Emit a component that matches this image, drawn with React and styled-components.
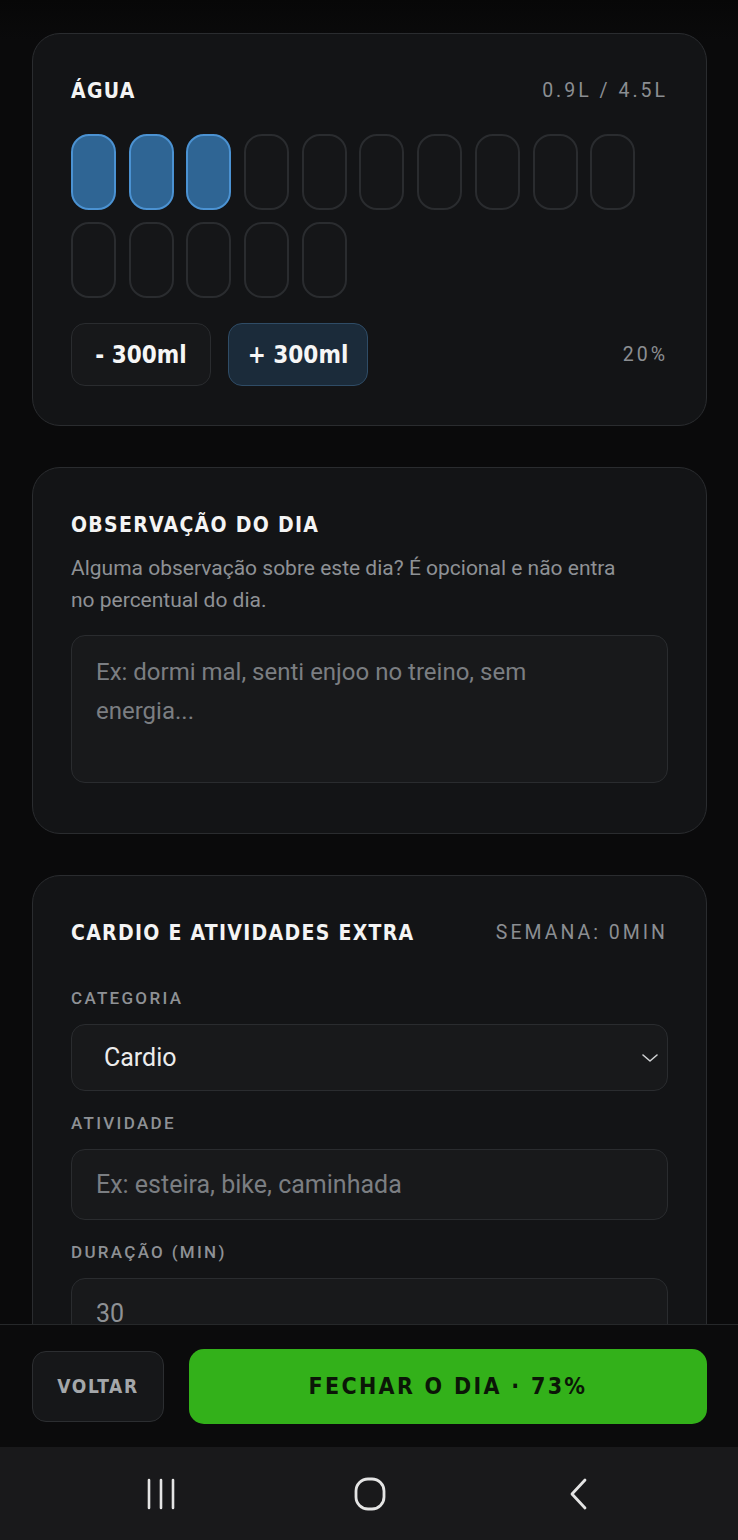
import styled, { createGlobalStyle } from "styled-components";

const GlobalStyle = createGlobalStyle`
  html, body {
    margin: 0;
    padding: 0;
    background: #0a0a0b;
  }
  * {
    box-sizing: border-box;
  }
`;

const narrow = `"Liberation Sans Narrow", "DejaVu Sans Condensed", "Roboto", sans-serif`;
const body = `"Roboto", "Liberation Sans", sans-serif`;

const cups = Array.from({ length: 15 }, (_, i) => i < 3);

const App = () => {
  return (
    <>
      <GlobalStyle />
      <Screen>
        <Scroll>
          <Card>
            <CardHeader>
              <CardTitle>ÁGUA</CardTitle>
              <Meta>0.9L / 4.5L</Meta>
            </CardHeader>
            <CupGrid>
              {cups.map((full, i) => (
                <Cup key={i} full={full} />
              ))}
            </CupGrid>
            <WaterActions>
              <WaterButton>- 300ml</WaterButton>
              <WaterButton primary>+ 300ml</WaterButton>
              <Percent>20%</Percent>
            </WaterActions>
          </Card>

          <Card bottom={50}>
            <CardTitle>OBSERVAÇÃO DO DIA</CardTitle>
            <Description>
              Alguma observação sobre este dia? É opcional e não entra no
              percentual do dia.
            </Description>
            <NoteArea placeholder="Ex: dormi mal, senti enjoo no treino, sem energia..." />
          </Card>

          <Card>
            <CardHeader>
              <CardTitle>CARDIO E ATIVIDADES EXTRA</CardTitle>
              <Meta>SEMANA: 0MIN</Meta>
            </CardHeader>
            <Fields>
              <FieldLabel>CATEGORIA</FieldLabel>
              <SelectBox>
                <span>Cardio</span>
                <svg width="18" height="10" viewBox="0 0 18 10" fill="none">
                  <path
                    d="M2 2l7 6 7-6"
                    stroke="#d0d2d4"
                    strokeWidth="1.6"
                    strokeLinecap="round"
                    strokeLinejoin="round"
                  />
                </svg>
              </SelectBox>
              <FieldLabel>ATIVIDADE</FieldLabel>
              <TextInput placeholder="Ex: esteira, bike, caminhada" />
              <FieldLabel>DURAÇÃO (MIN)</FieldLabel>
              <TextInput defaultValue="30" />
            </Fields>
          </Card>
        </Scroll>

        <Footer>
          <BackButton>VOLTAR</BackButton>
          <CloseButton>FECHAR O DIA · 73%</CloseButton>
        </Footer>

        <NavBar>
          <svg width="34" height="34" viewBox="0 0 34 34" fill="none">
            <path
              d="M4 3v28M16 3v28M28 3v28"
              stroke="#e4e4e4"
              strokeWidth="2.6"
              strokeLinecap="round"
            />
          </svg>
          <svg width="34" height="34" viewBox="0 0 34 34" fill="none">
            <rect
              x="3"
              y="2"
              width="28"
              height="30"
              rx="12"
              stroke="#e4e4e4"
              strokeWidth="2.8"
            />
          </svg>
          <svg width="34" height="34" viewBox="0 0 34 34" fill="none">
            <path
              d="M24 3L11 17l13 14"
              stroke="#e4e4e4"
              strokeWidth="2.8"
              strokeLinecap="round"
              strokeLinejoin="round"
            />
          </svg>
        </NavBar>
      </Screen>
    </>
  );
};

export default App;

const Screen = styled.div`
  height: 1540px;
  width: 738px;
  display: flex;
  flex-direction: column;
  background: #0a0a0b;
  overflow: hidden;
`;

const Scroll = styled.div`
  flex: 1;
  min-height: 0;
  overflow: hidden;
  padding: 33px 31px 0 32px;
  display: flex;
  flex-direction: column;
  gap: 41px;
  background: linear-gradient(180deg, #070707 0px, #0a0a0b 40px);
`;

const Card = styled.section`
  flex-shrink: 0;
  background: #131416;
  border: 1px solid #2a2c2f;
  border-radius: 28px;
  padding: 44px 38px ${(p) => p.bottom || 39}px;
`;

const CardHeader = styled.div`
  display: flex;
  justify-content: space-between;
  align-items: center;
`;

const CardTitle = styled.h2`
  margin: 0;
  font-family: ${narrow};
  font-weight: 700;
  font-size: 21px;
  line-height: 26px;
  letter-spacing: 1.3px;
  color: #f4f4f4;
`;

const Meta = styled.span`
  font-family: ${body};
  font-size: 19.5px;
  line-height: 26px;
  letter-spacing: 3px;
  color: #8b8e92;
`;

const CupGrid = styled.div`
  margin-top: 30px;
  display: grid;
  grid-template-columns: repeat(10, 45px);
  column-gap: 12.7px;
  row-gap: 12px;
`;

const Cup = styled.div`
  height: 76px;
  border-radius: 18px;
  background: ${(p) => (p.full ? "#2f6594" : "#151618")};
  border: 2px solid ${(p) => (p.full ? "#4b92d2" : "#2a2c2f")};
`;

const WaterActions = styled.div`
  margin-top: 25px;
  display: flex;
  align-items: center;
  gap: 17px;
`;

const WaterButton = styled.button`
  width: 140px;
  height: 63px;
  border-radius: 14px;
  background: ${(p) => (p.primary ? "#1b2b3a" : "#17181a")};
  border: 1px solid ${(p) => (p.primary ? "#2f4c66" : "#2a2c2f")};
  color: #f6f6f6;
  font-family: ${narrow};
  font-weight: 700;
  font-size: 24px;
  padding: 0;
`;

const Percent = styled.span`
  margin-left: auto;
  font-family: ${body};
  font-size: 19.5px;
  letter-spacing: 3px;
  color: #8b8e92;
`;

const Description = styled.p`
  margin: 14px 0 0;
  max-width: 560px;
  font-family: ${body};
  font-size: 21px;
  line-height: 32px;
  color: #8e9195;
`;

const NoteArea = styled.textarea`
  display: block;
  margin-top: 19px;
  width: 100%;
  height: 148px;
  resize: none;
  background: #18191b;
  border: 1px solid #2a2c2f;
  border-radius: 14px;
  padding: 17px 60px 17px 24px;
  font-family: ${body};
  font-size: 24px;
  line-height: 39px;
  color: #e6e6e6;
  outline: none;
  &::placeholder {
    color: #7b7e82;
  }
`;

const Fields = styled.div`
  margin-top: 41px;
  display: flex;
  flex-direction: column;
`;

const FieldLabel = styled.label`
  font-family: ${body};
  font-weight: 500;
  font-size: 17px;
  line-height: 22px;
  letter-spacing: 2.3px;
  color: #8e9195;
  margin-bottom: 15px;
  &:not(:first-child) {
    margin-top: 21px;
  }
`;

const SelectBox = styled.div`
  height: 67px;
  border-radius: 14px;
  background: #18191b;
  border: 1px solid #2a2c2f;
  display: flex;
  align-items: center;
  justify-content: space-between;
  padding: 0 8px 0 32px;
  font-family: ${body};
  font-size: 25px;
  color: #ececec;
`;

const TextInput = styled.input`
  height: 71px;
  border-radius: 14px;
  background: #18191b;
  border: 1px solid #2a2c2f;
  padding: 0 24px;
  font-family: ${body};
  font-size: 25px;
  color: #8e9195;
  outline: none;
  &::placeholder {
    color: #7b7e82;
  }
`;

const Footer = styled.footer`
  flex-shrink: 0;
  height: 123px;
  border-top: 1px solid #26282a;
  background: #0b0b0c;
  display: flex;
  align-items: center;
  gap: 25px;
  padding: 0 31px 0 32px;
`;

const BackButton = styled.button`
  width: 132px;
  height: 71px;
  border-radius: 14px;
  background: #161719;
  border: 1px solid #2c2e31;
  color: #a4a7aa;
  font-family: ${narrow};
  font-weight: 700;
  font-size: 19px;
  letter-spacing: 1.6px;
  padding: 0;
`;

const CloseButton = styled.button`
  flex: 1;
  height: 75px;
  border-radius: 15px;
  border: none;
  background: #33b11a;
  color: #0b1607;
  font-family: ${narrow};
  font-weight: 700;
  font-size: 23px;
  letter-spacing: 2.3px;
  padding: 0;
`;

const NavBar = styled.nav`
  flex-shrink: 0;
  height: 93px;
  background: #19191b;
  display: flex;
  align-items: center;
  justify-content: space-between;
  padding: 0 143px 0 145px;
`;
